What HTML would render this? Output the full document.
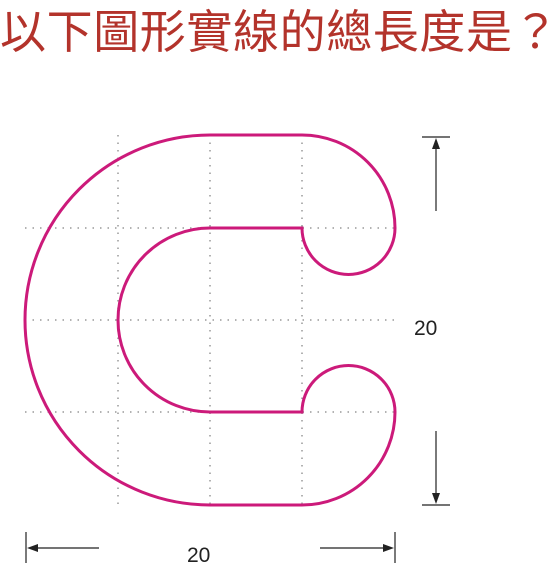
<!DOCTYPE html>
<html><head><meta charset="utf-8"><style>
html,body{margin:0;padding:0;background:#fff;width:560px;height:563px;overflow:hidden}
.t{position:absolute;left:0;top:-4px;font:400 46px "Noto Sans CJK TC","WenQuanYi Zen Hei",sans-serif;color:#b3332b;letter-spacing:0.6px;white-space:nowrap}
svg{position:absolute;left:0;top:0}
</style></head><body>
<div class="t">以下圖形實線的總長度是？</div>
<svg width="560" height="563" viewBox="0 0 560 563">
<g stroke="#999" stroke-width="1.5" stroke-dasharray="1.5 6" fill="none">
<line x1="118" y1="135" x2="118" y2="505"/>
<line x1="210" y1="135" x2="210" y2="505"/>
<line x1="302" y1="135" x2="302" y2="505"/>
<line x1="25" y1="228" x2="395" y2="228"/>
<line x1="25" y1="320" x2="395" y2="320"/>
<line x1="25" y1="412" x2="395" y2="412"/>
</g>
<path d="M210 135 L302 135 A93 93 0 0 1 395 228 A46.5 46.5 0 0 1 302 228 L210 228 A92 92 0 0 0 210 412 L302 412 A46.5 46.5 0 0 1 395 412 A93 93 0 0 1 302 505 L210 505 A185 185 0 0 1 210 135 Z" fill="none" stroke="#cc1a7a" stroke-width="3"/>
<g stroke="#222" stroke-width="1.2" fill="#222">
<line x1="422" y1="137" x2="450" y2="137"/>
<line x1="422" y1="505" x2="450" y2="505"/>
<line x1="436" y1="145" x2="436" y2="211"/>
<line x1="436" y1="431" x2="436" y2="497"/>
<polygon points="436,138 432,149 440,149" stroke="none"/>
<polygon points="436,504 432,493 440,493" stroke="none"/>
<line x1="26" y1="532" x2="26" y2="563"/>
<line x1="395" y1="532" x2="395" y2="563"/>
<line x1="34" y1="548" x2="99" y2="548"/>
<line x1="320" y1="548" x2="386" y2="548"/>
<polygon points="27,548 38,544 38,552" stroke="none"/>
<polygon points="394,548 383,544 383,552" stroke="none"/>
</g>
<text x="414" y="335" font-family="Liberation Sans,sans-serif" font-size="21" fill="#222">20</text>
<text x="187" y="562" font-family="Liberation Sans,sans-serif" font-size="21" fill="#222">20</text>
</svg>
</body></html>
